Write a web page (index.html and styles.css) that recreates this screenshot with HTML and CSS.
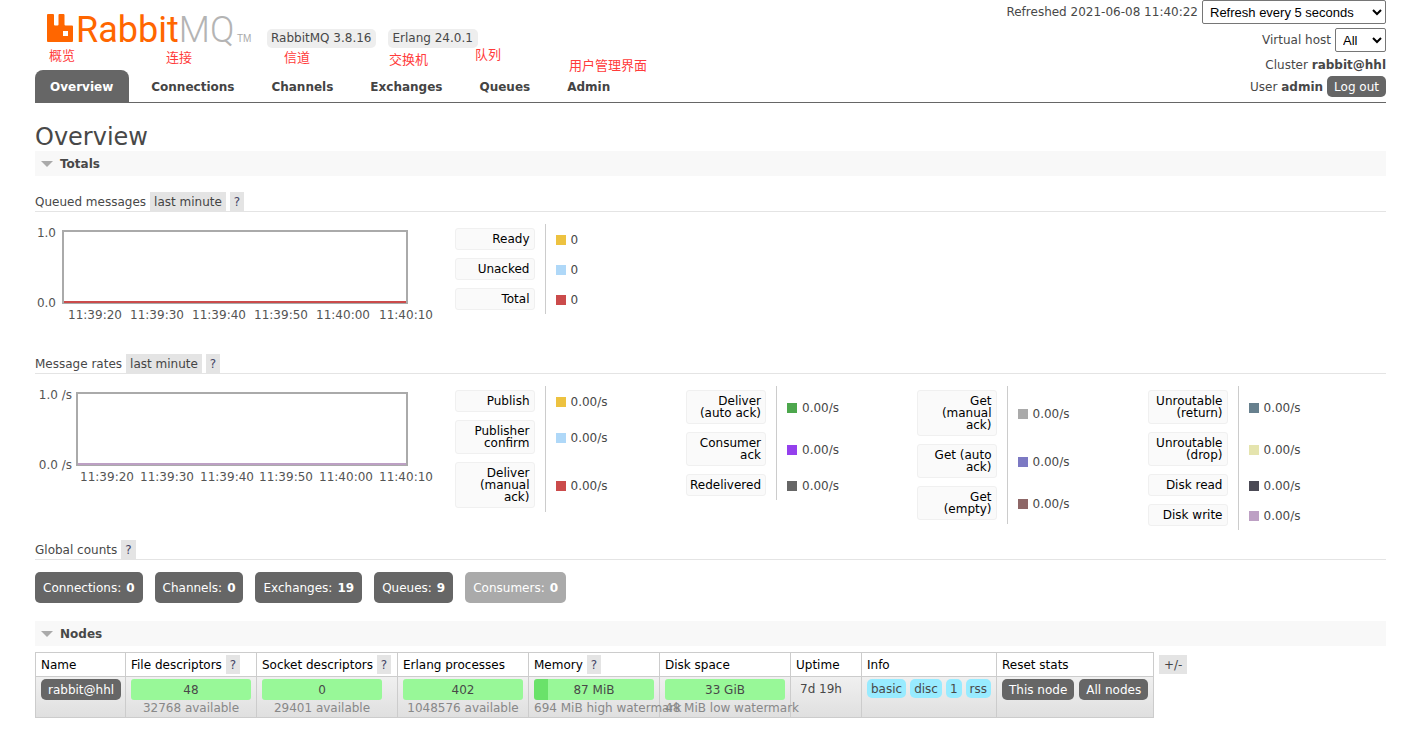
FILE: index.html
```html
<!DOCTYPE html>
<html lang="en">
<head>
<meta charset="utf-8">
<title>RabbitMQ Management</title>
<link rel="stylesheet" href="styles.css">
</head>
<body>
<header class="header">
  <div class="brand">
    <svg class="logo" width="206" height="34" viewBox="0 0 206 34" role="img" aria-label="RabbitMQ">
      <path class="logo-mark" fill-rule="evenodd" d="M1 0h5q1 0 1 1V10.500q0 1 1 1h2.500q1 0 1-1V1q0-1 1-1h4q1 0 1 1V10.500q0 1 1 1h6.500q1 0 1 1V27q0 1-1 1h-24Q0 28 0 27v-26Q0 0 1 0zM16 17v5h5v-5z"/>
      <text class="logo-text" x="29" y="28"><tspan class="logo-rabbit">Rabbit</tspan><tspan class="logo-mq">MQ</tspan></text>
      <text class="logo-tm" x="190" y="28">TM</text>
    </svg>
    <span class="version">RabbitMQ 3.8.16</span>
    <span class="version">Erlang 24.0.1</span>
  </div>
  <div class="status">
    <div class="status-row"><label for="refresh">Refreshed 2021-06-08 11:40:22</label>
      <select id="refresh" class="select refresh"><option>Refresh every 5 seconds</option></select></div>
    <div class="status-row vhost"><label for="vhost">Virtual host</label>
      <select id="vhost" class="select host"><option>All</option></select></div>
    <div class="status-row cluster"><span>Cluster <b>rabbit@hhl</b></span></div>
    <div class="status-row"><span>User <b>admin</b></span> <button class="button" type="button">Log out</button></div>
  </div>
  <nav class="tabs">
    <a class="tab selected" href="#overview">Overview</a>
    <a class="tab" href="#connections">Connections</a>
    <a class="tab" href="#channels">Channels</a>
    <a class="tab" href="#exchanges">Exchanges</a>
    <a class="tab" href="#queues">Queues</a>
    <a class="tab" href="#admin">Admin</a>
  </nav>
  <span class="note note-overview" lang="zh">概览</span>
  <span class="note note-connections" lang="zh">连接</span>
  <span class="note note-channels" lang="zh">信道</span>
  <span class="note note-exchanges" lang="zh">交换机</span>
  <span class="note note-queues" lang="zh">队列</span>
  <span class="note note-admin" lang="zh">用户管理界面</span>
</header>

<main class="main">
  <h1 class="title">Overview</h1>
  <h2 class="section">Totals</h2>

  <h3 class="subhead first">Queued messages <button class="chip" type="button">last minute</button><button class="chip help" type="button">?</button></h3>
  <div class="stats">
    <svg class="chart" width="420" height="120" viewBox="0 0 420 120">
      <rect class="frame" x="28" y="7" width="344" height="72"/>
      <path class="line-total" d="M29 78H371"/>
      <text x="21" y="13" text-anchor="end">1.0</text>
      <text x="21" y="83" text-anchor="end">0.0</text>
      <g text-anchor="middle">
        <text x="60" y="95">11:39:20</text><text x="122" y="95">11:39:30</text><text x="184" y="95">11:39:40</text>
        <text x="246" y="95">11:39:50</text><text x="308" y="95">11:40:00</text><text x="371" y="95">11:40:10</text>
      </g>
    </svg>
    <table class="legend">
      <tr><th><span>Ready</span></th><td><i class="yellow"></i>0</td></tr>
      <tr><th><span>Unacked</span></th><td><i class="sky"></i>0</td></tr>
      <tr><th><span>Total</span></th><td><i class="red"></i>0</td></tr>
    </table>
  </div>

  <h3 class="subhead">Message rates <button class="chip" type="button">last minute</button><button class="chip help" type="button">?</button></h3>
  <div class="stats">
    <svg class="chart" width="420" height="120" viewBox="0 0 420 120">
      <rect class="frame" x="42" y="7" width="330" height="72"/>
      <path class="line-write" d="M43 78H371"/>
      <text x="37" y="13" text-anchor="end">1.0 /s</text>
      <text x="37" y="83" text-anchor="end">0.0 /s</text>
      <g text-anchor="middle">
        <text x="72" y="95">11:39:20</text><text x="132" y="95">11:39:30</text><text x="192" y="95">11:39:40</text>
        <text x="251" y="95">11:39:50</text><text x="311" y="95">11:40:00</text><text x="371" y="95">11:40:10</text>
      </g>
    </svg>
    <table class="legend">
      <tr><th><span>Publish</span></th><td><i class="yellow"></i>0.00/s</td></tr>
      <tr><th><span>Publisher confirm</span></th><td><i class="sky"></i>0.00/s</td></tr>
      <tr><th><span>Deliver (manual ack)</span></th><td><i class="red"></i>0.00/s</td></tr>
    </table>
    <table class="legend">
      <tr><th><span>Deliver (auto ack)</span></th><td><i class="green"></i>0.00/s</td></tr>
      <tr><th><span>Consumer ack</span></th><td><i class="violet"></i>0.00/s</td></tr>
      <tr><th><span>Redelivered</span></th><td><i class="dark"></i>0.00/s</td></tr>
    </table>
    <table class="legend">
      <tr><th><span>Get (manual ack)</span></th><td><i class="gray"></i>0.00/s</td></tr>
      <tr><th><span>Get (auto ack)</span></th><td><i class="indigo"></i>0.00/s</td></tr>
      <tr><th><span>Get (empty)</span></th><td><i class="brown"></i>0.00/s</td></tr>
    </table>
    <table class="legend">
      <tr><th><span>Unroutable (return)</span></th><td><i class="teal"></i>0.00/s</td></tr>
      <tr><th><span>Unroutable (drop)</span></th><td><i class="cream"></i>0.00/s</td></tr>
      <tr><th><span>Disk read</span></th><td><i class="ink"></i>0.00/s</td></tr>
      <tr><th><span>Disk write</span></th><td><i class="mauve"></i>0.00/s</td></tr>
    </table>
  </div>

  <h3 class="subhead">Global counts <button class="chip help" type="button">?</button></h3>
  <div class="counts">
    <a class="count" href="#connections">Connections: <b>0</b></a>
    <a class="count" href="#channels">Channels: <b>0</b></a>
    <a class="count" href="#exchanges">Exchanges: <b>19</b></a>
    <a class="count" href="#queues">Queues: <b>9</b></a>
    <span class="count disabled">Consumers: <b>0</b></span>
  </div>

  <h2 class="section">Nodes</h2>
  <div class="nodes-wrap">
    <table class="nodes">
      <colgroup><col class="c-name"><col class="c-bar"><col class="c-socket"><col class="c-bar"><col class="c-bar"><col class="c-bar"><col class="c-uptime"><col class="c-info"><col class="c-reset"></colgroup>
      <thead>
        <tr><th>Name</th><th>File descriptors <button class="chip help" type="button">?</button></th><th>Socket descriptors <button class="chip help" type="button">?</button></th><th>Erlang processes</th><th>Memory <button class="chip help" type="button">?</button></th><th>Disk space</th><th>Uptime</th><th>Info</th><th>Reset stats</th></tr>
      </thead>
      <tbody>
        <tr>
          <td><a class="button" href="#node">rabbit@hhl</a></td>
          <td><div class="bar">48</div><div class="sub">32768 available</div></td>
          <td><div class="bar">0</div><div class="sub">29401 available</div></td>
          <td><div class="bar">402</div><div class="sub">1048576 available</div></td>
          <td><div class="bar memory">87 MiB</div><div class="sub">694 MiB high watermark</div></td>
          <td><div class="bar">33 GiB</div><div class="sub">48 MiB low watermark</div></td>
          <td class="uptime">7d 19h</td>
          <td><div class="group"><span class="tag">basic</span><span class="tag">disc</span><span class="tag">1</span><span class="tag">rss</span></div></td>
          <td><div class="group resets"><button class="button" type="button">This node</button><button class="button" type="button">All nodes</button></div></td>
        </tr>
      </tbody>
    </table>
    <button class="chip columns" type="button">+/-</button>
  </div>
</main>
</body>
</html>
```
FILE: styles.css
```css
* { box-sizing: border-box; }
body { margin: 0; background: #fff; color: #484848; font: 12px/16px "DejaVu Sans", Verdana, sans-serif; }
button { font: inherit; border: 0; margin: 0; cursor: pointer; }
a { color: inherit; text-decoration: none; }

.header {
  position: relative;
  display: grid;
  grid-template-columns: 1fr auto;
  margin: 0 28px 0 35px;
  border-bottom: 1px solid #666;
}
.brand { display: flex; align-items: flex-start; padding: 14px 0 0 12px; }
.logo { margin-right: 14px; overflow: visible; }
.logo-mark { fill: #f60; }
.logo-text { font-family: Roboto, sans-serif; font-size: 36px; }
.logo-rabbit { fill: #f60; font-weight: 400; }
.logo-mq { fill: #b4b4b4; font-weight: 300; }
.logo-tm { font-family: "Liberation Sans", sans-serif; font-size: 10px; fill: #aaa; }
.version { margin: 15px 12px 0 0; padding: 1px 5px 2px 4px; border-radius: 5px; background: #eee; white-space: nowrap; }

.status { grid-column: 2; grid-row: 1 / 3; padding-bottom: 5px; }
.status-row { display: flex; justify-content: flex-end; align-items: center; gap: 4px; }
.vhost { margin: 4px 0 5px; }
.cluster { margin-bottom: 3px; }
.select {
  height: 24px;
  padding: 0 3px;
  border: 1px solid #767676;
  border-radius: 2px;
  background: #fff;
  color: #000;
  font: 13px "Liberation Sans", Arial, sans-serif;
}
.refresh { width: 184px; }
.host { width: 51px; }

.tabs { grid-column: 1; grid-row: 2; display: flex; align-items: flex-end; gap: 7px; }
.tab { padding: 9px 15px 7px; border-radius: 8px 8px 0 0; color: #444; font-weight: bold; }
.tab.selected { padding-right: 16px; background: #666; color: #fff; }

.note { position: absolute; color: #ff3b3b; font: 13px/16px "Noto Sans CJK SC", sans-serif; white-space: nowrap; }
.note-overview { left: 14px; top: 47px; }
.note-connections { left: 131px; top: 49px; }
.note-channels { left: 249px; top: 49px; }
.note-exchanges { left: 354px; top: 51px; }
.note-queues { left: 440px; top: 46px; }
.note-admin { left: 534px; top: 57px; }

.button { display: inline-block; padding: 3px 7px 2px; border-radius: 5px; background: #666; color: #fff; white-space: nowrap; }

.main { padding: 21px 28px 16px 35px; }
.title { margin: 0; font-size: 24px; line-height: 27px; font-weight: normal; }
.section { display: flex; align-items: center; gap: 7px; height: 25px; margin: 0; padding-left: 6px; background: #f8f8f8; font-size: 12px; }
.section::before { content: ""; border: 6px solid transparent; border-top-color: #aaa; border-bottom: 0; }
.subhead { display: flex; align-items: center; gap: 4px; margin: 0; border-bottom: 1px solid #e4e4e4; font-size: 12px; font-weight: normal; }
.subhead.first { margin-top: 16px; }
.chip { padding: 2px 4px 1px; background: #e4e4e4; color: #444; }
.help { color: #446; }

.stats { display: flex; align-items: flex-start; padding: 12px 0 10px; }
.chart { flex: none; fill: #545454; }
.frame { fill: none; stroke: #aaa; stroke-width: 2; }
.line-total { stroke: #cb4b4b; stroke-width: 2; }
.line-write { stroke: #bda0c4; stroke-width: 2; }

.legend { width: 231px; border-collapse: collapse; }
.legend th { width: 90px; padding: 4px 10px 4px 0; border-right: 1px solid #ccc; font-weight: normal; }
.legend span { display: block; padding: 4px 4px 4px 3px; border: 1px solid #f0f0f0; border-radius: 3px; background: #fafafa; color: #000; line-height: 12px; text-align: right; }
.legend td { padding: 1px 0 0 10px; }
.legend i { display: inline-block; width: 10px; height: 10px; margin-right: 5px; vertical-align: -1px; }
.yellow { background: #edc240; }
.sky { background: #afd8f8; }
.red { background: #cb4b4b; }
.green { background: #4da74d; }
.violet { background: #9440ed; }
.dark { background: #666; }
.gray { background: #aaa; }
.indigo { background: #7c79c3; }
.brown { background: #8e6767; }
.teal { background: #67808e; }
.cream { background: #e5e4ae; }
.ink { background: #4b4a55; }
.mauve { background: #bda0c4; }

.counts { display: flex; gap: 12px; padding: 12px 0 18px; }
.count { display: flex; gap: 5px; padding: 8px 8px 7px; border-radius: 5px; background: #666; color: #fff; }
.count.disabled { background: #aaa; }

.nodes-wrap { display: flex; align-items: flex-start; gap: 5px; padding-top: 6px; }
.nodes { width: 1119px; table-layout: fixed; border-collapse: collapse; }
.c-name { width: 90px; }
.c-bar { width: 131px; }
.c-socket { width: 141px; }
.c-uptime { width: 71px; }
.c-info { width: 135px; }
.c-reset { width: 157px; }
.nodes th, .nodes td { border: 1px solid #ccc; text-align: left; white-space: nowrap; }
.nodes th { padding: 2px 5px; color: #000; font-weight: normal; }
.nodes td { padding: 2px 5px 1px; vertical-align: top; }
.nodes tbody tr { background: linear-gradient(#f0f0f0, #dfdfdf); }
.nodes .uptime { padding: 4px 9px; }
.bar { width: 120px; padding: 3px 0 2px; border-radius: 3px; background: #98f898; text-align: center; }
.bar.memory { background: linear-gradient(90deg, #6ae26a 12%, #98f898 12%); }
.sub { width: 120px; color: #888; text-align: center; }
.group { display: flex; gap: 4px; }
.resets { gap: 5px; }
.tag { height: 19px; padding: 2px 4px 1px; border-radius: 5px; background: #98ebff; }
.columns { margin-top: 3px; padding: 2px 5px 1px; }
```
